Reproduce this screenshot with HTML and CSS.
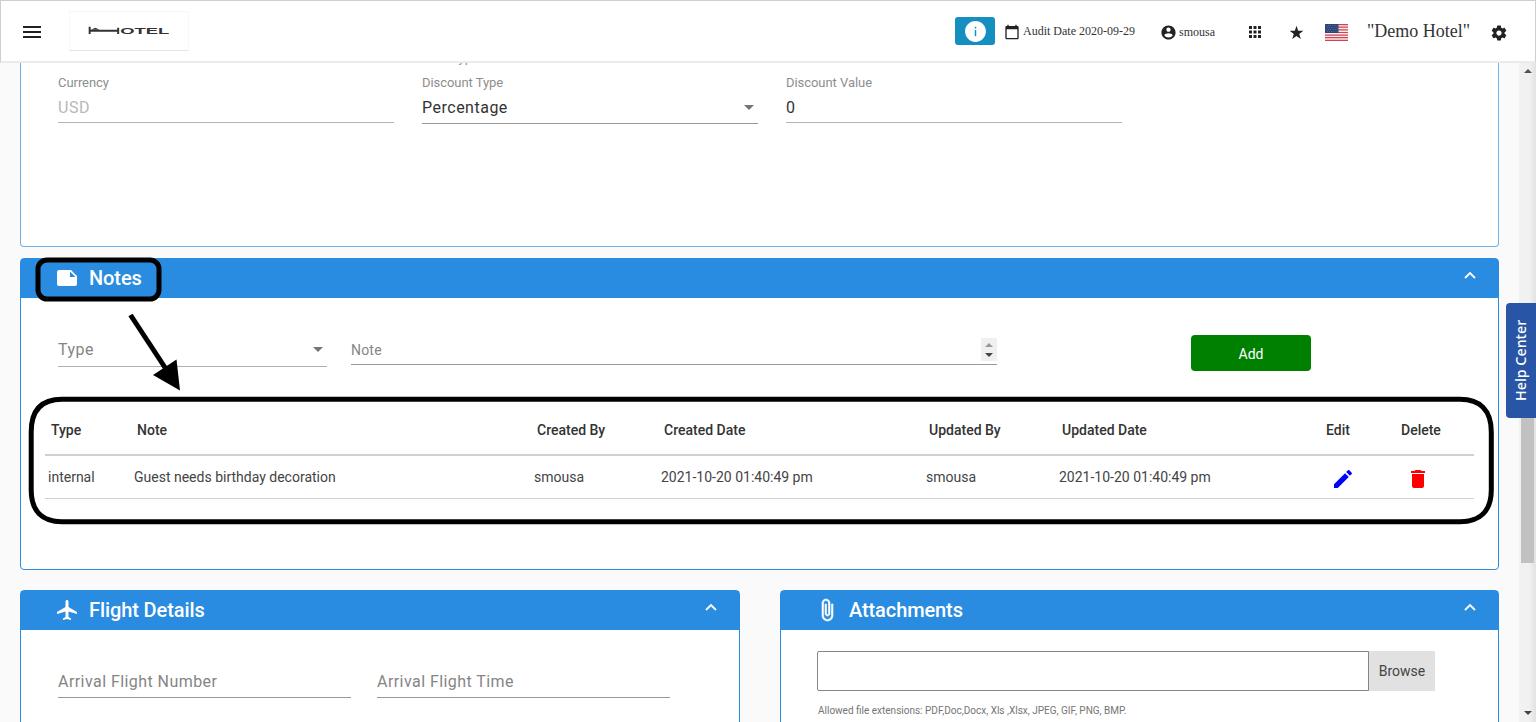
FILE: index.html
```html
<!DOCTYPE html>
<html lang="en">
<head>
    <meta charset="UTF-8">
    <title>Demo Hotel</title>
    <meta name="viewport" content="width=device-width, initial-scale=1">
    <link rel="stylesheet" href="styles.css">
</head>
<body>
    <header class="topbar">
        <svg class="menu" viewBox="0 0 24 24"><path d="M3 18h18v-2H3v2zm0-5h18v-2H3v2zm0-7v2h18V6H3z"/></svg>
        <div class="logo">
            <svg viewBox="0 0 120 40">
                <path d="M20 15v7.500M20 19h29M49 16v6.500" fill="none" stroke="#333" stroke-width="2"/>
                <path d="M21 18l5-2 4 2h-9z" fill="#333"/>
                <text x="51" y="22" textLength="50" lengthAdjust="spacingAndGlyphs">OTEL</text>
            </svg>
        </div>
        <button class="info"><svg viewBox="0 0 24 24"><path d="M12 2C6.480 2 2 6.480 2 12s4.480 10 10 10 10-4.480 10-10S17.520 2 12 2zm.7 14.500h-1.400V10.500h1.400v6zm0-7.500h-1.400V7.500h1.400V9z"/></svg></button>
        <svg class="calendar" viewBox="0 0 24 24"><path d="M20 3h-1V1h-2v2H7V1H5v2H4c-1.100 0-2 .9-2 2v16c0 1.100.9 2 2 2h16c1.100 0 2-.9 2-2V5c0-1.100-.9-2-2-2zm0 18H4V8h16v13z"/></svg>
        <span class="audit">Audit Date 2020-09-29</span>
        <svg class="account" viewBox="0 0 24 24"><path d="M12 2C6.480 2 2 6.480 2 12s4.480 10 10 10 10-4.480 10-10S17.520 2 12 2zm0 3c1.660 0 3 1.340 3 3s-1.340 3-3 3-3-1.340-3-3 1.340-3 3-3zm0 14.200c-2.500 0-4.710-1.280-6-3.220.03-1.990 4-3.080 6-3.080 1.990 0 5.970 1.090 6 3.080-1.290 1.940-3.500 3.220-6 3.220z"/></svg>
        <span class="user">smousa</span>
        <svg class="apps" viewBox="0 0 24 24"><path d="M4 8h4V4H4v4zm6 12h4v-4h-4v4zm-6 0h4v-4H4v4zm0-6h4v-4H4v4zm6 0h4v-4h-4v4zm6-10v4h4V4h-4zm-6 4h4V4h-4v4zm6 6h4v-4h-4v4zm0 6h4v-4h-4v4z"/></svg>
        <svg class="star" viewBox="0 0 24 24"><path d="M12 1l2.700 8.200H23l-6.700 5 2.600 8.300-6.900-5.100-6.900 5.100 2.600-8.300L1 9.200h8.300z"/></svg>
        <svg class="flag" viewBox="0 0 23 17">
            <path fill="#fbe9ea" d="M0 0h23v17H0z"/>
            <path stroke="#cf4453" stroke-width="1.200" d="M0 .6h23M0 3.200h23M0 5.800h23M0 8.500h23M0 11.100h23M0 13.700h23M0 16.400h23"/>
            <path fill="#2c4677" d="M0 0h13.500v9H0z"/>
            <path stroke="#8193b4" stroke-width=".7" stroke-dasharray=".7 1.500" d="M1 1.500h12M2 3.500h11M1 5.500h12M2 7.500h11"/>
        </svg>
        <span class="hotel">"Demo Hotel"</span>
        <svg class="gear" viewBox="0 0 24 24"><path d="M19.430 12.980c.04-.32.070-.64.070-.98s-.03-.66-.07-.98l2.110-1.650c.19-.15.240-.42.120-.64l-2-3.460c-.12-.22-.39-.3-.61-.22l-2.490 1c-.52-.4-1.080-.73-1.690-.98l-.38-2.650C14.460 2.180 14.250 2 14 2h-4c-.25 0-.46.180-.49.420l-.38 2.650c-.61.250-1.170.59-1.690.98l-2.490-1c-.23-.09-.49 0-.61.220l-2 3.460c-.13.220-.07.490.12.640l2.110 1.650c-.04.320-.07.650-.07.980s.03.660.07.980l-2.110 1.650c-.19.150-.24.420-.12.640l2 3.460c.12.220.39.300.61.220l2.490-1c.52.400 1.080.73 1.690.98l.38 2.650c.03.240.24.420.49.420h4c.25 0 .46-.18.490-.42l.38-2.650c.61-.25 1.170-.59 1.690-.98l2.490 1c.23.090.49 0 .61-.22l2-3.460c.12-.22.070-.49-.12-.64l-2.110-1.650zM12 15.500c-1.930 0-3.500-1.570-3.500-3.500s1.570-3.500 3.500-3.500 3.500 1.570 3.500 3.500-1.570 3.500-3.500 3.500z"/></svg>
    </header>

    <div class="content">
        <main>
            <section class="panel discount">
                <div class="cut-row"><span>Rate Type</span></div>
                <div class="fields">
                    <div class="field disabled">
                        <label>Currency</label>
                        <div class="value">USD</div>
                    </div>
                    <div class="field select">
                        <label>Discount Type</label>
                        <div class="value">Percentage<i class="caret"></i></div>
                    </div>
                    <div class="field">
                        <label>Discount Value</label>
                        <div class="value">0</div>
                    </div>
                </div>
            </section>

            <section class="panel notes">
                <div class="panel-head">
                    <svg viewBox="0 0 24 24"><path d="M22 10l-6-6H4c-1.100 0-2 .9-2 2v12.010c0 1.100.9 1.990 2 1.990l16-.01c1.100 0 2-.89 2-1.990v-8zm-7-4.500l5.500 5.500H15V5.500z"/></svg>
                    <h2>Notes</h2>
                    <svg class="chevron" viewBox="0 0 12 8"><path d="M1 7l5-5 5 5"/></svg>
                </div>
                <div class="note-form">
                    <div class="note-type">Type<i class="caret"></i></div>
                    <div class="note-text">Note<span class="spin"><i class="up"></i><i class="down"></i></span></div>
                    <button class="add">Add</button>
                </div>
                <table>
                    <colgroup>
                        <col class="c-type"><col class="c-note"><col class="c-by"><col class="c-date">
                        <col class="c-upby"><col class="c-update"><col class="c-edit"><col>
                    </colgroup>
                    <tr>
                        <th>Type</th>
                        <th>Note</th>
                        <th>Created By</th>
                        <th>Created Date</th>
                        <th>Updated By</th>
                        <th>Updated Date</th>
                        <th>Edit</th>
                        <th>Delete</th>
                    </tr>
                    <tr>
                        <td>internal</td>
                        <td>Guest needs birthday decoration</td>
                        <td>smousa</td>
                        <td>2021-10-20 01:40:49 pm</td>
                        <td>smousa</td>
                        <td>2021-10-20 01:40:49 pm</td>
                        <td class="icon"><svg class="edit" viewBox="0 0 24 24"><path d="M3 17.250V21h3.750L17.810 9.940l-3.750-3.750L3 17.250zM20.710 7.040c.39-.39.39-1.020 0-1.410l-2.340-2.340c-.39-.39-1.020-.39-1.410 0l-1.830 1.830 3.750 3.750 1.830-1.830z"/></svg></td>
                        <td class="icon"><svg class="delete" viewBox="0 0 24 24"><path d="M6 19c0 1.100.9 2 2 2h8c1.100 0 2-.9 2-2V7H6v12zM19 4h-3.500l-1-1h-5l-1 1H5v2h14V4z"/></svg></td>
                    </tr>
                </table>
            </section>

            <div class="columns">
                <section class="panel flight">
                    <div class="panel-head">
                        <svg viewBox="0 0 24 24"><path d="M22 16v-2l-8.500-5V3.500c0-.83-.67-1.500-1.500-1.500s-1.500.67-1.500 1.500V9L2 14v2l8.500-2.500V19L8 20.500V22l4-1 4 1v-1.500L13.500 19v-5.500L22 16z"/></svg>
                        <h2>Flight Details</h2>
                        <svg class="chevron" viewBox="0 0 12 8"><path d="M1 7l5-5 5 5"/></svg>
                    </div>
                    <div class="flight-form">
                        <div>Arrival Flight Number</div>
                        <div>Arrival Flight Time</div>
                    </div>
                </section>
                <section class="panel attachments">
                    <div class="panel-head">
                        <svg class="clip" viewBox="0 0 24 24"><path d="M16.500 6v11.500c0 2.210-1.790 4-4 4s-4-1.790-4-4V5c0-1.380 1.120-2.500 2.500-2.500s2.500 1.120 2.500 2.500v10.500c0 .55-.45 1-1 1s-1-.45-1-1V6H10v9.500c0 1.380 1.120 2.500 2.500 2.500s2.500-1.120 2.500-2.500V5c0-2.210-1.790-4-4-4S7 2.790 7 5v12.500c0 3.040 2.460 5.500 5.500 5.500s5.500-2.460 5.500-5.500V6h-1.500z"/></svg>
                        <h2>Attachments</h2>
                        <svg class="chevron" viewBox="0 0 12 8"><path d="M1 7l5-5 5 5"/></svg>
                    </div>
                    <div class="upload">
                        <div class="file"></div>
                        <button class="browse">Browse</button>
                    </div>
                    <p class="hint">Allowed file extensions: PDF,Doc,Docx, Xls ,Xlsx, JPEG, GIF, PNG, BMP.</p>
                </section>
            </div>
        </main>
        <div class="scrollbar">
            <i class="up"></i>
            <div class="thumb"></div>
            <i class="down"></i>
        </div>
    </div>

    <div class="help">Help Center</div>

    <!-- callouts over the page -->
    <svg class="callouts" width="1536" height="722" viewBox="0 0 1536 722">
        <rect x="38" y="260" width="121" height="39" rx="9"/>
        <path d="M62 399.300H1460C1480 399.300 1491.300 410 1491.300 432V490C1491.300 511 1480 521.700 1460 521.700H62C42 521.700 31.200 511 31.200 490V432C31.200 410 42 399.300 62 399.300Z"/>
        <path d="M130.500 315L166 369"/>
        <path class="tip" d="M180 390.500L153 375L176.500 359.500Z"/>
    </svg>
</body>
</html>
```
FILE: styles.css
```css
* {
    box-sizing: border-box;
}
body {
    margin: 0;
    height: 722px;
    overflow: hidden;
    display: flex;
    flex-direction: column;
    position: relative;
    background: #fafafa;
    color: #333;
    font-family: Roboto, sans-serif;
}
svg {
    display: block;
    flex: none;
}
button {
    border: 0;
    padding: 0;
    font-family: Roboto, sans-serif;
}

/* top bar */
.topbar {
    flex: none;
    height: 63px;
    display: flex;
    align-items: center;
    background: #fff;
    border: 1px solid #cfcfcf;
    border-bottom: 2px solid #ebebeb;
    font-family: "Liberation Serif", serif;
    white-space: nowrap;
    fill: #222;
}
.menu {
    width: 24px;
    height: 24px;
    margin-left: 19px;
    margin-top: 2px;
}
.logo {
    width: 120px;
    height: 40px;
    margin-left: 25px;
    border: 1px solid #f7f7f7;
    border-bottom-color: #e4e4e4;
}
.logo text {
    font: bold 8.500px "Liberation Sans", sans-serif;
    fill: #333;
}
.info {
    width: 40px;
    height: 28px;
    margin-left: 766px;
    border-radius: 3px;
    background: #158fc0;
    fill: #fff;
}
.info svg {
    width: 25px;
    height: 25px;
    margin: 0 0 0 8px;
}
.calendar {
    width: 16px;
    height: 16px;
    margin-left: 9px;
    margin-top: 1px;
}
.audit {
    width: 112px;
    margin-left: 3px;
    margin-top: 1px;
    font-size: 12px;
}
.account {
    width: 17px;
    height: 17px;
    margin-left: 25px;
    margin-top: 2px;
}
.user {
    width: 36px;
    margin-left: 2px;
    margin-top: 2px;
    font-size: 12px;
}
.apps {
    width: 18px;
    height: 18px;
    margin-left: 31px;
    margin-top: 1px;
}
.star {
    width: 15px;
    height: 15px;
    margin-left: 25px;
    margin-top: 2px;
}
.flag {
    width: 23px;
    height: 17px;
    margin-left: 21px;
    margin-top: 3px;
}
.hotel {
    width: 104px;
    margin-left: 19px;
    font-size: 18px;
}
.gear {
    width: 18px;
    height: 18px;
    margin-left: 19px;
    margin-top: 4px;
}

/* page */
.content {
    flex: 1;
    display: flex;
    min-height: 0;
}
main {
    flex: 1;
    padding: 0 20px;
    overflow: hidden;
}
.panel {
    background: #fff;
    border: 1px solid #2a8ce0;
    border-radius: 4px;
}
.panel-head {
    height: 39px;
    display: flex;
    align-items: center;
    padding: 0 22px 1px 34px;
    background: #2a8ce0;
    color: #fff;
    fill: #fff;
}
.panel-head svg {
    width: 24px;
    height: 24px;
}
.panel-head .clip {
    stroke: #fff;
    stroke-width: .6;
}
.panel-head h2 {
    flex: 1;
    margin: -1px 0 0 10px;
    font-size: 20px;
    font-weight: 500;
    letter-spacing: -0.100px;
}
.panel-head .chevron {
    width: 12px;
    height: 8px;
    margin-top: -6px;
    fill: none;
    stroke: #fff;
    stroke-width: 1.800;
}
.caret {
    border: 5px solid transparent;
    border-top-color: #757575;
    border-bottom: 0;
}

.discount {
    height: 184px;
    border-top: 0;
    border-color: #6cb4f0;
    border-radius: 0 0 4px 4px;
}
.cut-row {
    height: 2px;
    overflow: hidden;
    padding-left: 401px;
    display: flex;
    align-items: flex-end;
    color: #8e8e8e;
    font-size: 13px;
    line-height: 15px;
}
.fields {
    display: flex;
    gap: 28px;
    padding: 10px 37px;
}
.field {
    width: 336px;
}
.field label {
    display: block;
    font-size: 13px;
    line-height: 15px;
    letter-spacing: -0.050px;
    color: #8e8e8e;
}
.value {
    display: flex;
    align-items: center;
    justify-content: space-between;
    height: 33px;
    padding-top: 2px;
    border-bottom: 1px solid #b5b5b5;
    font-size: 16px;
    letter-spacing: 0.500px;
}
.select .value {
    height: 34px;
    padding: 1px 4px 0 0;
    border-color: #999;
}
.disabled .value {
    color: #b8b8b8;
}

/* notes */
.notes {
    height: 312px;
    margin-top: 11px;
}
.note-form {
    display: flex;
    padding: 35px 37px 0;
    color: #858585;
}
.note-type {
    width: 269px;
    height: 34px;
    display: flex;
    align-items: center;
    justify-content: space-between;
    padding: 0 4px 0 0;
    border-bottom: 1px solid #b0b0b0;
    font-size: 16px;
    letter-spacing: 0.500px;
}
.note-text {
    width: 646px;
    height: 32px;
    margin-left: 24px;
    display: flex;
    align-items: center;
    justify-content: space-between;
    padding-top: 2px;
    border-bottom: 1px solid #999;
    font-size: 14px;
    letter-spacing: 0.200px;
}
.spin {
    width: 16px;
    height: 23px;
    display: flex;
    flex-direction: column;
    align-items: center;
    justify-content: center;
    gap: 6px;
    background: #f0f0f0;
}
.up,
.down {
    border: 4px solid transparent;
}
.up {
    border-top: 0;
    border-bottom-color: #999;
}
.down {
    border-bottom: 0;
    border-top-color: #444;
}
.add {
    width: 120px;
    height: 36px;
    padding-top: 1px;
    margin: 2px 0 0 194px;
    border-radius: 4px;
    background: #008000;
    color: #fff;
    font-size: 14px;
}
table {
    width: 1429px;
    margin: 33px 0 0 24px;
    table-layout: fixed;
    border-collapse: separate;
    border-spacing: 0;
    font-size: 14px;
}
.c-type { width: 86px; }
.c-note { width: 400px; }
.c-by { width: 127px; }
.c-date { width: 265px; }
.c-upby { width: 133px; }
.c-update { width: 264px; }
.c-edit { width: 75px; }
th {
    height: 52px;
    padding: 2px 6px 0;
    border-bottom: 2px solid #d3cfd0;
    text-align: left;
    font-weight: 500;
}
td {
    height: 43px;
    padding: 0 3px;
    border-bottom: 1px solid #d3cfd0;
    color: #444;
}
td.icon {
    padding: 3px 11px 0;
}
.icon svg {
    width: 24px;
    height: 24px;
}
.edit {
    fill: #00f;
}
.delete {
    fill: #f00;
}

/* bottom panels */
.columns {
    display: flex;
    gap: 40px;
    margin-top: 20px;
}
.columns .panel {
    height: 200px;
}
.flight {
    width: 720px;
}
.attachments {
    width: 719px;
}
.flight-form {
    display: flex;
    gap: 26px;
    padding: 35px 37px;
}
.flight-form div {
    width: 293px;
    height: 33px;
    border-bottom: 1px solid #999;
    color: #858585;
    font-size: 16px;
    line-height: 34px;
    letter-spacing: 0.440px;
}
.upload {
    display: flex;
    padding: 21px 36px 0;
}
.file {
    width: 552px;
    height: 40px;
    border: 1px solid #858585;
    border-radius: 2px 0 0 2px;
}
.browse {
    width: 66px;
    height: 40px;
    background: #e1e1e1;
    color: #444;
    font-size: 14px;
}
.hint {
    margin: 13px 37px;
    font-size: 10px;
    line-height: 14px;
    color: #757575;
}

/* scrollbar */
.scrollbar {
    width: 17px;
    display: flex;
    flex-direction: column;
    align-items: center;
    padding: 6px 0 7px;
    background: linear-gradient(to right, #f1f1f1 60%, #e2e2e2);
}
.scrollbar .up {
    border-bottom-color: #505050;
}
.thumb {
    width: 13px;
    height: 190px;
    margin: 300px 0 auto;
    background: #c1c1c1;
}

.help {
    position: absolute;
    right: 0;
    top: 303px;
    width: 30px;
    height: 115px;
    border-radius: 0 4px 4px 0;
    background: #2855a5;
    color: #fff;
    font: 500 14.300px/30px "Noto Sans", sans-serif;
    text-align: center;
    writing-mode: vertical-rl;
    transform: rotate(180deg);
}
.callouts {
    position: absolute;
    left: 0;
    top: 0;
    fill: none;
    stroke: #000;
    stroke-width: 5;
}
.callouts .tip {
    fill: #000;
    stroke: none;
}
```
